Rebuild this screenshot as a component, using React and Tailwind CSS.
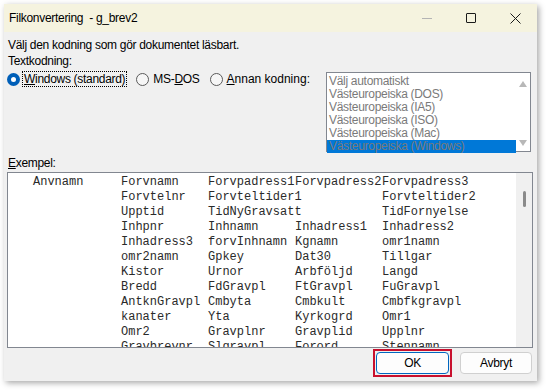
import { useState } from "react";

const encodings = [
  "Välj automatiskt",
  "Västeuropeiska (DOS)",
  "Västeuropeiska (IA5)",
  "Västeuropeiska (ISO)",
  "Västeuropeiska (Mac)",
  "Västeuropeiska (Windows)",
];

const rows = [
  ["Anvnamn", "Forvnamn", "Forvpadress1", "Forvpadress2", "Forvpadress3"],
  ["", "Forvtelnr", "Forvteltider1", "", "Forvteltider2"],
  ["", "Upptid", "TidNyGravsatt", "", "TidFornyelse"],
  ["", "Inhpnr", "Inhnamn", "Inhadress1", "Inhadress2"],
  ["", "Inhadress3", "forvInhnamn", "Kgnamn", "omr1namn"],
  ["", "omr2namn", "Gpkey", "Dat30", "Tillgar"],
  ["", "Kistor", "Urnor", "Arbföljd", "Langd"],
  ["", "Bredd", "FdGravpl", "FtGravpl", "FuGravpl"],
  ["", "AntknGravpl", "Cmbyta", "Cmbkult", "Cmbfkgravpl"],
  ["", "kanater", "Yta", "Kyrkogrd", "Omr1"],
  ["", "Omr2", "Gravplnr", "Gravplid", "Upplnr"],
  ["", "Gravbrevnr", "Slgravpl", "Forord", "Stennamn"],
];

function Radio({ checked }) {
  if (checked) {
    return (
      <span className="flex h-[13px] w-[13px] shrink-0 items-center justify-center rounded-full bg-[#005fb8]">
        <span className="h-[5px] w-[5px] rounded-full bg-white" />
      </span>
    );
  }
  return <span className="h-[13px] w-[13px] shrink-0 rounded-full border border-[#5a5a5a] bg-[#f6f6f6]" />;
}

export default function App() {
  const [choice, setChoice] = useState("win");

  return (
    <div className="h-[390px] w-[546px] bg-white pl-[4px] pt-[4px] font-['Segoe_UI','Liberation_Sans',sans-serif] text-[12px] tracking-[-0.3px] text-black">
      <div className="flex h-[377px] w-[533px] flex-col bg-[#f0f0f0] shadow-[2px_2px_6px_rgba(0,0,0,0.35)]">

        {/* Title bar */}
        <div className="flex h-[28px] items-center bg-[#f5f3df] pl-[5px]">
          <span className="whitespace-pre">Filkonvertering  - g_brev2</span>
          <div className="ml-auto flex h-full items-center">
            <div className="flex w-[44px] items-center justify-center">
              <span className="h-px w-[10px] bg-[#b4b4b4]" />
            </div>
            <div className="flex w-[44px] items-center justify-center">
              <span className="h-[10px] w-[10px] rounded-[1px] border border-[#1a1a1a]" />
            </div>
            <div className="flex w-[44px] items-center justify-center">
              <svg width="11" height="11" viewBox="0 0 11 11">
                <path d="M0.5 0.5 L10.5 10.5 M10.5 0.5 L0.5 10.5" stroke="#1a1a1a" strokeWidth="1" />
              </svg>
            </div>
          </div>
        </div>

        {/* Body */}
        <div className="flex flex-1 flex-col px-[3px] pt-[5px]">
          <div className="h-[16px] pl-[1px] leading-[16px]">Välj den kodning som gör dokumentet läsbart.</div>
          <div className="h-[16px] pl-[1px] leading-[16px]">Textkodning:</div>

          <div className="flex items-start">
            <div className="mt-[2px] flex items-center whitespace-nowrap">
              <button onClick={() => setChoice("win")} className="flex items-center gap-[2px]">
                <Radio checked={choice === "win"} />
                <span className="border border-dotted border-black px-[1px] leading-[14px]">
                  <span className="underline">W</span>indows (standard)
                </span>
              </button>
              <button onClick={() => setChoice("dos")} className="ml-[9px] flex items-center gap-[4px]">
                <Radio checked={choice === "dos"} />
                <span className="leading-[14px]">MS-<span className="underline">D</span>OS</span>
              </button>
              <button onClick={() => setChoice("other")} className="ml-[10px] flex items-center gap-[4px]">
                <Radio checked={choice === "other"} />
                <span className="leading-[14px] tracking-[0px]"><span className="underline">A</span>nnan kodning:</span>
              </button>
            </div>

            {/* Encoding list */}
            <div className="ml-auto mr-[3px] mt-[3px] flex h-[80px] w-[205px] border border-[#828790] bg-white pt-[2px]">
              <div className="flex-1 text-[#7a7a7a]">
                {encodings.map((e, i) => (
                  <div
                    key={e}
                    className={"h-[13px] pl-[2px] leading-[13px] " + (i === encodings.length - 1 ? "bg-[#0078d7]" : "")}
                  >
                    {e}
                  </div>
                ))}
              </div>
              <div className="flex w-[14px] flex-col items-center justify-between pb-[5px] pt-[6px]">
                <span className="h-0 w-0 border-x-[4px] border-b-[6px] border-x-transparent border-b-[#b8b8b8]" />
                <span className="h-0 w-0 border-x-[4px] border-t-[6px] border-x-transparent border-t-[#b8b8b8]" />
              </div>
            </div>
          </div>

          <div className="mt-[3px] h-[17px] pl-[1px] leading-[17px]">
            <span className="underline">E</span>xempel:
          </div>

          {/* Example preview */}
          <div className="mr-[1px] flex h-[176px] overflow-hidden border border-[#828790] bg-white">
            <div className="flex-1 overflow-hidden pl-[25px] pt-[2px] font-['Courier_New','Liberation_Mono',monospace] text-[12px] leading-[15px] tracking-normal text-[#2a2a2a]">
              {rows.map((r, i) => (
                <div key={i} className="grid grid-cols-[88px_87px_87px_87px_87px] whitespace-pre">
                  {r.map((c, j) => (
                    <span key={j}>{c}</span>
                  ))}
                </div>
              ))}
            </div>
            <div className="flex w-[16px] justify-center bg-[#f0f0f0] pt-[18px]">
              <span className="h-[16px] w-[3px] rounded-full bg-[#8a8a8a]" />
            </div>
          </div>

          {/* Buttons */}
          <div className="mt-[4px] flex justify-end gap-[11px] pr-[2px]">
            <div className="-m-[3px] border-2 border-[#c8102e] p-[1px]">
              <button className="h-[22px] w-[73px] rounded-[4px] border border-[#0067c0] bg-[#fdfdfd]">OK</button>
            </div>
            <button className="h-[22px] w-[72px] rounded-[4px] border border-[#d0d0d0] bg-[#fdfdfd]">Avbryt</button>
          </div>
        </div>
      </div>
    </div>
  );
}
